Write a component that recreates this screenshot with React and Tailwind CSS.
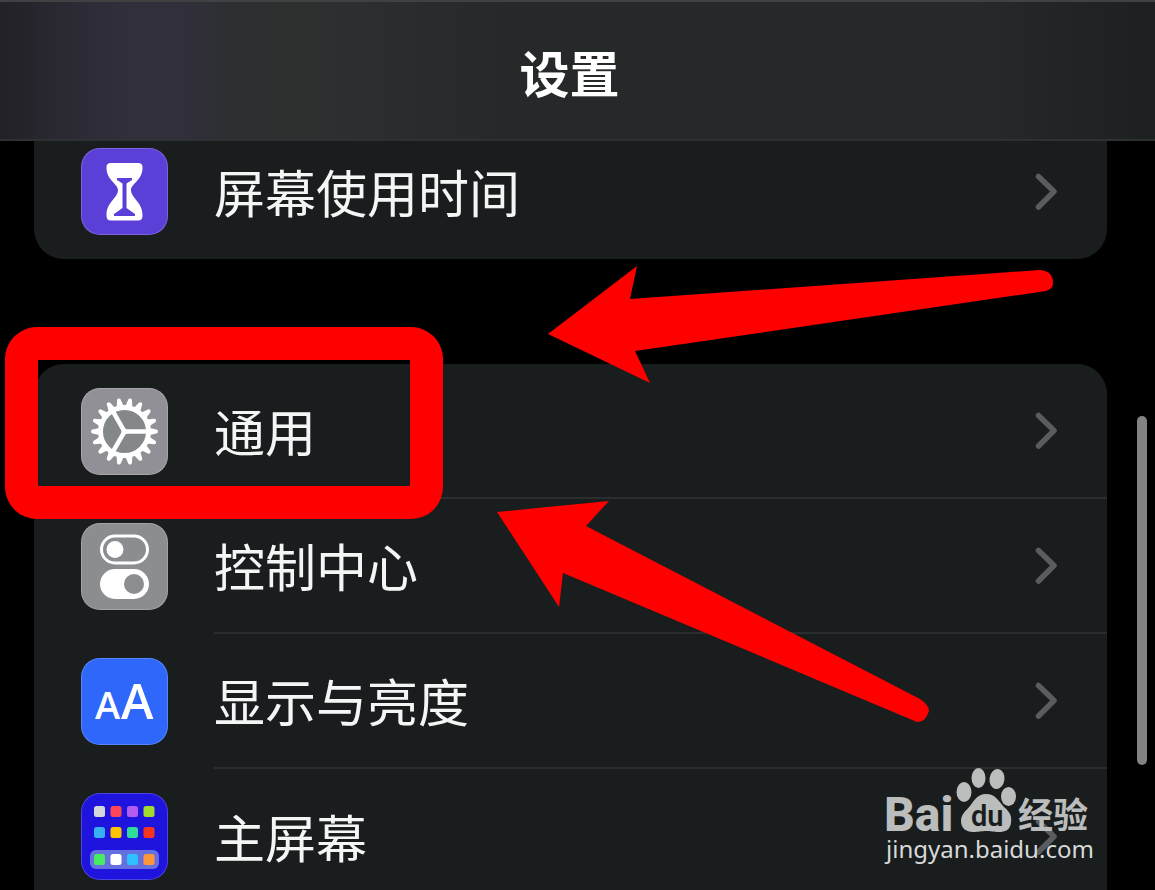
import { useState } from "react";

const TEETH = Array.from({ length: 18 }, (_, i) => i * 20);

function HourglassIcon() {
  return (
    <svg viewBox="0 0 87 87" className="size-full" aria-hidden="true">
      <path
        d="M30 15H57Q62 15 61.500 20C61.500 32 50 36 50 42C50 50 61.500 54 61.500 67Q62 72.500 57 72.500H30Q25 72.500 25.500 67C25.500 54 37 50 37 42C37 36 25.500 32 25.500 20Q25 15 30 15Z"
        fill="#fff"
      />
      <path
        d="M36 30H51V32L45.500 35.500V60L54 66V68H33V66L41.500 60V35.500L36 32Z"
        fill="#5b3fd6"
      />
    </svg>
  );
}

function GearIcon() {
  return (
    <svg viewBox="0 0 87 87" className="size-full" aria-hidden="true">
      <g transform="translate(43.5 43.5)">
        <circle r="24" fill="#84888a" stroke="#fff" strokeWidth="5" />
        {TEETH.map((deg) => (
          <path
            key={deg}
            d="M25 -3.6L32 -1.900Q33.500 -1.700 33.500 0Q33.500 1.700 32 1.900L25 3.600Z"
            fill="#fff"
            transform={`rotate(${deg})`}
          />
        ))}
        {[0, 120, 240].map((deg) => (
          <path key={deg} d="M0 0H24" stroke="#fff" strokeWidth="4.500" transform={`rotate(${deg})`} />
        ))}
        <circle r="3" fill="#fff" />
      </g>
    </svg>
  );
}

function TogglesIcon() {
  return (
    <svg viewBox="0 0 87 87" className="size-full" aria-hidden="true">
      <rect x="20.500" y="13" width="46" height="27" rx="13.500" fill="none" stroke="#fff" strokeWidth="3" />
      <circle cx="34" cy="26.500" r="8.500" fill="#fff" />
      <rect x="19" y="46" width="49" height="30" rx="15" fill="#fff" />
      <circle cx="53" cy="61" r="10" fill="#8b8d91" />
    </svg>
  );
}

function DisplayIcon() {
  return (
    <svg
      viewBox="0 0 87 87"
      className="size-full font-['Open_Sans',sans-serif] font-semibold"
      fill="#fff"
      aria-hidden="true"
    >
      <text x="14" y="61" fontSize="38">A</text>
      <text x="40" y="61" fontSize="49">A</text>
    </svg>
  );
}

const APP_COLORS = [
  ["#d5d8da", "#ff4657", "#b45cf0", "#9fdb2c"],
  ["#37b0f4", "#ffc400", "#2fdc9a", "#f4361e"],
  ["#45ec60", "#ffffff", "#2fc0ff", "#ff9738"],
];
const APP_ROWS = [13, 34, 61];

function HomeScreenIcon() {
  return (
    <svg viewBox="0 0 87 87" className="size-full" aria-hidden="true">
      <rect x="9" y="57" width="69" height="19" rx="6" fill="#6470e0" />
      {APP_COLORS.map((row, r) =>
        row.map((color, c) => (
          <rect key={color} x={13 + c * 16.5} y={APP_ROWS[r]} width="11" height="11" rx="2.500" fill={color} />
        ))
      )}
    </svg>
  );
}

// both cards run past the visible area, so each is only rounded on one side
const GROUPS = [
  {
    id: "usage",
    shape: "rounded-b-[30px]",
    items: [{ id: "screen-time", label: "屏幕使用时间", Icon: HourglassIcon, tile: "bg-[#5b3fd6]" }],
  },
  {
    id: "device",
    shape: "rounded-t-[30px]",
    items: [
      { id: "general", label: "通用", Icon: GearIcon, tile: "bg-[#919097]" },
      { id: "control", label: "控制中心", Icon: TogglesIcon, tile: "bg-[#8b8d91]" },
      { id: "display", label: "显示与亮度", Icon: DisplayIcon, tile: "bg-[#2e67fa]" },
      { id: "home", label: "主屏幕", Icon: HomeScreenIcon, tile: "bg-[#1f14dd]" },
    ],
  },
];

function SettingsRow({ item, last, onSelect }) {
  const { Icon } = item;
  return (
    <li>
      <button
        type="button"
        onClick={() => onSelect(item.id)}
        className="flex h-[135px] w-full items-center gap-[46px] pl-[47px] text-left"
      >
        <span
          className={`size-[87px] shrink-0 overflow-hidden rounded-[19px] ring-1 ring-white/20 ring-inset ${item.tile}`}
        >
          <Icon />
        </span>
        <span
          className={`flex h-full flex-1 items-center justify-between pr-[50px] ${
            last ? "" : "border-b-2 border-[#2b2e2f]"
          }`}
        >
          <span className="text-[51px] leading-none text-[#f4f6f6]">{item.label}</span>
          <svg viewBox="0 0 22 38" className="h-[38px] w-[22px]" fill="none" aria-hidden="true">
            <path
              d="M3.500 3.500L19 18.500L3.500 34"
              stroke="#5a5d5f"
              strokeWidth="5.500"
              strokeLinecap="round"
              strokeLinejoin="round"
            />
          </svg>
        </span>
      </button>
    </li>
  );
}

function Watermark() {
  return (
    <svg
      viewBox="0 0 210 102"
      className="absolute top-[765px] right-[61px] h-[102px] w-[210px] font-['Roboto','Noto_Sans_CJK_SC',sans-serif]"
      fill="#bbbdbd"
      role="img"
      aria-label="Baidu 经验"
    >
      <text x="0" y="66" fontSize="48" fontWeight="800">Bai</text>
      <ellipse cx="80" cy="27" rx="7.500" ry="10" />
      <ellipse cx="94.500" cy="13" rx="7" ry="10" />
      <ellipse cx="113" cy="14" rx="7.500" ry="10" transform="rotate(8 113 14)" />
      <ellipse cx="124.500" cy="31.500" rx="7.500" ry="9.500" />
      <path d="M102 29C112 29 115 37 120 42C126 47 128 51 127 58C126 65 121 67 115 67C109 67 107 66 102 66C97 66 95 67 89 67C82 67 77 63 77 56C77 49 82 46 86 41C90 36 93 29 102 29Z" />
      <text x="87" y="61" fontSize="29" fontWeight="600" fill="#1a1d1e">du</text>
      <text x="134" y="63" fontSize="35" fontWeight="700">经验</text>
      <text x="2" y="93" fontSize="24" fontWeight="400" fill="#d8dada" className="font-['Noto_Sans',sans-serif]">
        jingyan.baidu.com
      </text>
    </svg>
  );
}

function Annotations() {
  return (
    <div className="pointer-events-none absolute inset-0 z-20">
      <div className="absolute top-[327px] left-[5px] h-[192px] w-[438px] rounded-[32px] border-[33px] border-[#fe0000]" />
      <svg viewBox="0 0 1155 890" className="absolute top-0 left-0 h-[890px] w-[1155px]" fill="#fe0000" aria-hidden="true">
        <path d="M548 334L637 266L630 299L1040 270Q1053 271 1053 283Q1053 289 1046 291L635 351L650 383Z" />
        <path d="M497 512L609 501L586 526L920 699Q929 705 929 711Q925 723 917 722L563 573L559 607Z" />
      </svg>
    </div>
  );
}

export default function App() {
  const [, setSelected] = useState("general");

  return (
    <div className="relative h-screen overflow-hidden bg-black font-['Noto_Sans_CJK_SC',sans-serif]">
      <header className="relative z-10 flex h-[141px] items-center justify-center border-t-2 border-b-2 border-t-[#3f4243] border-b-[#2e3132] bg-[linear-gradient(90deg,#222126_0%,#2a2831_5%,#312f3c_11%,#312f3a_16%,#2d2f32_20%,#2c302f_24%,#2b2f2f_30%,#26292a_44%,#26292a_85%,#1d2020_100%)] pr-4">
        <h1 className="text-[50px] leading-none font-bold text-white">设置</h1>
      </header>

      {/* first card slides under the header */}
      <main className="-mt-[17px] flex flex-col gap-[105px] pr-12 pl-[34px]">
        {GROUPS.map((group) => (
          <ul key={group.id} className={`overflow-hidden bg-[#1a1d1e] ${group.shape}`}>
            {group.items.map((item, i) => (
              <SettingsRow key={item.id} item={item} last={i === group.items.length - 1} onSelect={setSelected} />
            ))}
          </ul>
        ))}
      </main>

      <div className="absolute top-[416px] right-2 h-[349px] w-[10px] rounded-full bg-[#838383]" />
      <Watermark />
      <Annotations />
    </div>
  );
}
